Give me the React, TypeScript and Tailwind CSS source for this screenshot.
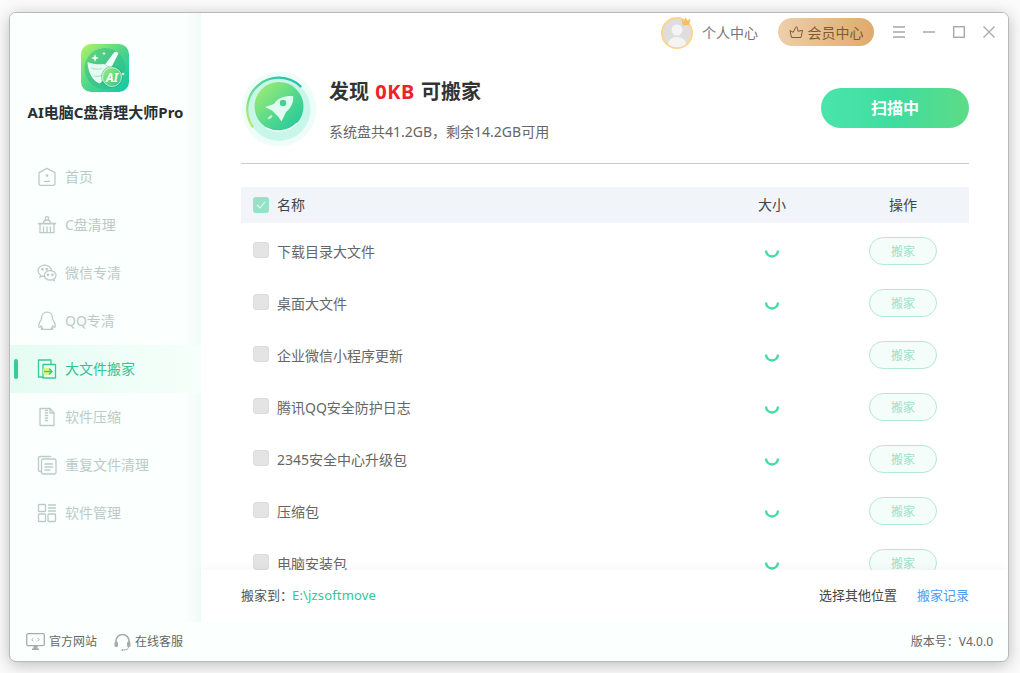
import type { ReactNode } from 'react';

const FONT = 'font-["Noto_Sans","Noto_Sans_CJK_SC",sans-serif]';

function NavIcon({ children, active }: { children: ReactNode; active?: boolean }) {
  return (
    <svg
      width="20"
      height="20"
      viewBox="0 0 20 20"
      fill="none"
      stroke={active ? '#3cc797' : '#bccbc8'}
      strokeWidth="1.3"
      strokeLinejoin="round"
      strokeLinecap="round"
    >
      {children}
    </svg>
  );
}

const navItems: { label: string; active?: boolean; icon: ReactNode }[] = [
  {
    label: '首页',
    icon: (
      <>
        <path d="M2 5.6 10 1.4l8 4.2v11.2c0 .9-.7 1.6-1.6 1.6H3.6c-.9 0-1.6-.7-1.6-1.6z" />
        <path d="M7.5 14.4h5" />
        <circle cx="10" cy="8.6" r=".7" fill="#bccbc8" />
      </>
    ),
  },
  {
    label: 'C盘清理',
    icon: (
      <>
        <path d="M1.5 8.6h17" strokeWidth="1.6" />
        <path d="M3 8.6v9h14v-9" />
        <path d="M6.5 8.6c0-2.2.6-3.6 3.5-3.6s3.500 1.400 3.500 3.600" />
        <path d="M8.500 5V2.500c0-1.300 3-1.300 3 0V5" />
        <path d="M6.500 12v5.500M10 12v5.500M13.500 12v5.500" />
      </>
    ),
  },
  {
    label: '微信专清',
    icon: (
      <>
        <path d="M7.800 2.200C4 2.200 1 4.700 1 7.800c0 1.800 1 3.300 2.600 4.400l-.7 2.100 2.400-1.300c.8.200 1.600.4 2.500.4" />
        <path d="M14.600 7.600c-.5-3-3.400-5.400-6.800-5.400" />
        <path d="M13.200 7.600c3.200 0 5.800 2.100 5.800 4.800 0 1.500-.8 2.800-2.100 3.700l.5 1.700-2-1.100c-.7.200-1.400.3-2.200.3-3.200 0-5.800-2.100-5.800-4.600s2.600-4.800 5.800-4.800z" />
        <circle cx="5.400" cy="6.300" r=".7" fill="#bccbc8" />
        <circle cx="9.800" cy="6.300" r=".7" fill="#bccbc8" />
        <circle cx="11" cy="11.800" r=".7" fill="#bccbc8" />
        <circle cx="15.400" cy="11.800" r=".7" fill="#bccbc8" />
      </>
    ),
  },
  {
    label: 'QQ专清',
    icon: (
      <path d="M10 1.200c-3.400 0-5.400 2.500-5.400 5.600 0 .8-.1 1.300-.5 2-.9 1.400-2.400 3.500-2.400 5.600 0 1 .3 1.900.8 1.900.6 0 1.200-.8 1.700-1.500.2 1 .8 1.800 1.500 2.400-.9.300-1.500.7-1.500 1.100h11.600c0-.4-.6-.8-1.500-1.100.7-.6 1.300-1.400 1.500-2.400.5.700 1.100 1.500 1.700 1.500.5 0 .8-.9.800-1.900 0-2.100-1.500-4.200-2.400-5.600-.4-.7-.5-1.200-.5-2 0-3.100-2-5.600-5.400-5.600z" />
    ),
  },
  {
    label: '大文件搬家',
    active: true,
    icon: (
      <>
        <path d="M6 18H1.500V1h12.500v4.500" />
        <path d="M6 5.500h12.500V19H6z" />
        <circle cx="9.500" cy="12.500" r="3.800" fill="#dff56e" stroke="none" />
        <path d="M7.500 12.500h7.500M12.500 10l2.500 2.500-2.500 2.500" strokeWidth="1.500" />
      </>
    ),
  },
  {
    label: '软件压缩',
    icon: (
      <>
        <path d="M3 1.500h10l4 4.500v12.500H3z" />
        <path d="M13 1.500V6h4" />
        <path d="M8.500 3.500h2M8.500 6h2M8.500 8.500h2M8.500 11h2M8.500 13.500h2" strokeWidth="1.600" />
      </>
    ),
  },
  {
    label: '重复文件清理',
    icon: (
      <>
        <path d="M4 16.500H3.200c-1 0-1.700-.7-1.700-1.700V3c0-1 .7-1.500 1.500-1.500h10.500" />
        <rect x="4.500" y="4" width="14.500" height="15" rx="1.500" />
        <path d="M8 9h7.500M8 12h7.500M8 15h5" />
      </>
    ),
  },
  {
    label: '软件管理',
    icon: (
      <>
        <rect x="1.500" y="1.500" width="7" height="7" rx=".8" />
        <rect x="1.500" y="11" width="7" height="7.500" rx=".8" />
        <rect x="11" y="11" width="7.500" height="7.500" rx=".8" />
        <path d="M11.500 2h7M11.500 5h7M11.500 8h7" />
      </>
    ),
  },
];

const rows = ['下载目录大文件', '桌面大文件', '企业微信小程序更新', '腾讯QQ安全防护日志', '2345安全中心升级包', '压缩包', '电脑安装包'];

function LogoIcon() {
  return (
    <svg width="48" height="48" viewBox="0 0 48 48" className="mr-[1px]">
      <defs>
        <linearGradient id="logoBg" x1="0" y1="0" x2="1" y2="1">
          <stop offset="0" stopColor="#b0f565" />
          <stop offset="0.5" stopColor="#4fd58a" />
          <stop offset="1" stopColor="#0cc7a9" />
        </linearGradient>
        <linearGradient id="logoBadge" x1="0" y1="0" x2="1" y2="1">
          <stop offset="0" stopColor="#a6ec6f" />
          <stop offset="1" stopColor="#22c98f" />
        </linearGradient>
      </defs>
      <rect width="48" height="48" rx="10" fill="url(#logoBg)" />
      <circle cx="24" cy="24.500" r="20.500" fill="#2fb987" opacity="0.5" />
      <path d="M33 8.500c1.200-1.300 3.500-.300 4 .500.500 1-.200 2-.800 3L30 24l-6-3.500z" fill="#f2fff9" />
      <path d="M6.500 18c5.500 2.500 11.500 2.500 16.500 2l6 3.800c-1.500 6-5 12-10.500 15.700C11.500 37 7 28 6.500 18z" fill="#e8fbf2" />
      <path d="M10 24c4 1.500 8 1.300 11 .500M13 32c3 .8 5.500.500 8-.800" stroke="#a7e8c9" strokeWidth="1.200" fill="none" />
      <circle cx="31" cy="33" r="11" fill="#1fa37c" opacity="0.4" />
      <circle cx="31" cy="33" r="9.500" fill="url(#logoBadge)" stroke="#d8f9e4" strokeWidth="0.800" />
      <text x="31" y="37.500" textAnchor="middle" fontSize="12" fontWeight="700" fontStyle="italic" fill="#fff" fontFamily="Noto Sans">AI</text>
      <path d="M14 10l1 3 3 1-3 1-1 3-1-3-3-1 3-1z" fill="#fff" />
      <path d="M23 7.500l.5 1.500 1.500.5-1.500.5-.5 1.500-.5-1.500-1.500-.5 1.500-.5z" fill="#fff" />
      <path d="M42 28l.5 1.500 1.500.5-1.500.5-.5 1.500-.5-1.500-1.500-.5 1.500-.5z" fill="#fff" />
    </svg>
  );
}

function HeroIcon() {
  return (
    <svg width="76" height="76" viewBox="0 0 76 76">
      <defs>
        <linearGradient id="heroFill" x1="0" y1="0" x2="1" y2="1">
          <stop offset="0" stopColor="#abee70" />
          <stop offset="0.6" stopColor="#4bd68f" />
          <stop offset="1" stopColor="#1cc4a0" />
        </linearGradient>
        <linearGradient id="heroArc" x1="0" y1="1" x2="1" y2="0">
          <stop offset="0" stopColor="#c6ea5a" />
          <stop offset="0.35" stopColor="#6fdd94" />
          <stop offset="1" stopColor="#10c2ac" />
        </linearGradient>
      </defs>
      <circle cx="38" cy="38" r="37.500" fill="#effdf9" />
      <circle cx="38" cy="38.500" r="31.500" fill="#c8f7ea" />
      <circle cx="38" cy="35.500" r="24.500" fill="url(#heroFill)" />
      <path d="M11.500 55.600A31.500 31.500 0 0 1 59.500 15.400" stroke="url(#heroArc)" strokeWidth="2.200" fill="none" strokeLinecap="round" />
      <path d="M25.500 57A25.500 25.500 0 0 0 55.500 52.500" stroke="#fff" strokeWidth="1.300" fill="none" strokeLinecap="round" opacity="0.9" />
      <path d="M52 25C44 24.500 36 27 33 33L24 36L31 39.500L37 45.500L40.500 50.500L45 41C50 37 53 31 52 25z" fill="#e2fbf0" />
      <circle cx="42" cy="32" r="3.200" fill="#45cf91" />
      <path d="M31 44c-2.500.5-4 2-4.500 4.500 2.500-.2 4-1.500 5-3.200z" fill="#e2fbf0" opacity="0.8" />
    </svg>
  );
}

function Spinner() {
  return (
    <svg width="14" height="10" viewBox="0 0 14 10" fill="none">
      <path d="M1 1.500A6 6 0 0 0 13 1.500" stroke="#43dba0" strokeWidth="2.300" />
    </svg>
  );
}

export default function App() {
  return (
    <div className={`${FONT} h-[673px] w-[1020px] overflow-hidden bg-[#fbfbfb] pt-[12px] pl-[9px]`}>
      <div className="flex h-[650px] w-[1000px] flex-col overflow-hidden rounded-[7px] border border-[#b9b9b9] bg-[#fbfffe] shadow-[0_3px_16px_rgba(0,0,0,0.25)]">
        <div className="flex min-h-0 flex-1">
          {/* sidebar */}
          <aside className="flex w-[191px] shrink-0 flex-col bg-gradient-to-r from-[#fbfffe] from-[92%] to-[#f1fbf8]">
            <div className="flex flex-col items-center pt-[31px]">
              <LogoIcon />
              <div className="mt-[9px] text-[15px] leading-[22px] font-bold whitespace-nowrap text-[#2a2f33]">AI电脑C盘清理大师Pro</div>
            </div>
            <nav className="mt-[30px] flex flex-col">
              {navItems.map((item) => (
                <div
                  key={item.label}
                  className={`relative flex h-[48px] items-center gap-[8px] pl-[27px] text-[14px] ${
                    item.active ? 'bg-gradient-to-r from-[#e4fcf3] to-[#f6fffb] text-[#2fc492]' : 'text-[#bccac7]'
                  }`}
                >
                  {item.active && <span className="absolute top-[14px] left-[4px] h-[20px] w-[4px] rounded-[2px] bg-[#3cc99b]" />}
                  <NavIcon active={item.active}>{item.icon}</NavIcon>
                  <span className="pb-[2px]">{item.label}</span>
                </div>
              ))}
            </nav>
          </aside>

          {/* main */}
          <main className="flex min-w-0 flex-1 flex-col bg-white">
            <div className="flex h-[39px] shrink-0 items-center justify-end pr-[13px] pb-[1px]">
              <svg width="36" height="36" viewBox="0 0 36 36">
                <circle cx="17" cy="19" r="15" fill="#dedede" stroke="#fdd48a" strokeWidth="2" />
                <circle cx="17" cy="16" r="5.500" fill="#f4f4f4" />
                <path d="M8 30c1-5 4.500-7 9-7s8 2 9 7a14 14 0 0 1-18 0z" fill="#f4f4f4" />
                <path d="M21 5l3 2 1.500-3.500 2 3 3-2-1.500 6.500-6 .5z" fill="#f7bf62" />
              </svg>
              <span className="ml-[6px] text-[14px] text-[#777]">个人中心</span>
              <div className="ml-[20px] flex h-[28px] w-[96px] items-center justify-center gap-[4px] rounded-full bg-gradient-to-r from-[#edcfa9] to-[#e0aa6b] text-[14px] text-[#7d5a36]">
                <svg width="15" height="14" viewBox="0 0 15 14" fill="none" stroke="#7d5a36" strokeWidth="1" strokeLinejoin="round">
                  <path d="M1 5.500l3.200 1.800L6.500 2.500c.3-.8 1.200-1.300 1.500 0l1.200 3.800 4.300-1-1.500 7.200H2.500z" />
                </svg>
                <span>会员中心</span>
              </div>
              <div className="ml-[19px] flex items-center gap-[18px]">
                <svg width="12" height="12" viewBox="0 0 12 12" stroke="#a8a8a8" strokeWidth="1.300"><path d="M0 1h12M0 6h12M0 11h12" /></svg>
                <svg width="12" height="12" viewBox="0 0 12 12" stroke="#a8a8a8" strokeWidth="1.300"><path d="M0 6h12" /></svg>
                <svg width="12" height="12" viewBox="0 0 12 12" fill="none" stroke="#a8a8a8" strokeWidth="1.400"><rect x=".7" y=".7" width="10.600" height="10.600" /></svg>
                <svg width="12" height="12" viewBox="0 0 12 12" stroke="#a8a8a8" strokeWidth="1.200"><path d="M.5.500l11 11M11.500.500l-11 11" /></svg>
              </div>
            </div>

            <div className="flex min-h-0 flex-1 flex-col pr-[39px] pl-[40px]">
              {/* hero */}
              <div className="flex h-[112px] shrink-0 items-start border-b border-[#cccccc]">
                <div className="mt-[19px]"><HeroIcon /></div>
                <div className="ml-[12px] flex flex-col pt-[24px]">
                  <div className="text-[20px] leading-[32px] font-bold whitespace-pre text-[#333]">
                    发现 <span className="ml-[1px] tracking-[0.5px] text-[#f0212b]">0KB</span> <span className="ml-[1px]">可搬家</span>
                  </div>
                  <div className="mt-[13px] text-[14px] leading-[22px] text-[#666]">系统盘共41.2GB，剩余14.2GB可用</div>
                </div>
                <div className="mt-[36px] ml-auto flex h-[40px] w-[148px] items-center justify-center rounded-full bg-gradient-to-r from-[#4ae5ab] via-[#3fdc9f] to-[#5cdc86] text-[16px] font-bold text-white">
                  扫描中
                </div>
              </div>

              {/* table */}
              <div className="mt-[23px] grid h-[36px] shrink-0 grid-cols-[466px_130px_132px] items-center bg-[#f1f4f9] text-[14px] text-[#444]">
                <div className="flex items-center gap-[8px] pl-[12px]">
                  <span className="flex h-[16px] w-[16px] items-center justify-center rounded-[3px] bg-[#96e2c6]">
                    <svg width="10" height="8" viewBox="0 0 10 8" fill="none" stroke="#e6f8f0" strokeWidth="1.100"><path d="M1 4l3 3 5-6" /></svg>
                  </span>
                  <span className="pb-[2px]">名称</span>
                </div>
                <div className="pb-[2px] text-center">大小</div>
                <div className="pb-[2px] text-center">操作</div>
              </div>
              <div className="min-h-0 flex-1 overflow-hidden pt-[2px]">
                {rows.map((name) => (
                  <div key={name} className="grid h-[52px] grid-cols-[466px_130px_132px] items-center text-[14px] text-[#666]">
                    <div className="flex items-center gap-[8px] pl-[12px]">
                      <span className="mb-[3px] h-[16px] w-[16px] rounded-[3px] border border-[#dcdcdc] bg-[#e4e4e4]" />
                      <span>{name}</span>
                    </div>
                    <div className="flex justify-center pt-[5px]"><Spinner /></div>
                    <div className="flex justify-center">
                      <span className="flex h-[28px] w-[68px] items-center justify-center rounded-full border border-[#b5e9d6] bg-[#f5fdfa] pt-[2px] text-[12px] text-[#9fe0c8]">搬家</span>
                    </div>
                  </div>
                ))}
              </div>
            </div>

            <div className="flex h-[52px] shrink-0 items-center bg-white pr-[39px] pl-[40px] text-[13px] text-[#555] shadow-[0_-3px_8px_rgba(0,0,0,0.03)]">
              <span>搬家到：</span>
              <span className="-ml-[1px] tracking-[0.15px] text-[#33c693]">E:\jzsoftmove</span>
              <span className="ml-auto text-[#444]">选择其他位置</span>
              <span className="ml-[20px] text-[#4a9df8]">搬家记录</span>
            </div>
          </main>
        </div>

        {/* footer */}
        <footer className="flex h-[39px] shrink-0 items-center pr-[15px] pl-[16px] text-[12px] text-[#666]">
          <svg width="19" height="17" viewBox="0 0 19 17" fill="none">
            <rect x=".7" y=".7" width="17.600" height="12" rx="1.500" stroke="#aaa" strokeWidth="1.300" />
            <path d="M7.500 5 5.800 6.700l1.700 1.700M11.500 5l1.700 1.700-1.700 1.700" stroke="#999" strokeWidth=".8" />
            <path d="M6 15.500h7v1.500H6zM7.500 13h4v2.500h-4z" fill="#aaa" />
          </svg>
          <span className="ml-[4px]">官方网站</span>
          <svg width="17" height="18" viewBox="0 0 17 18" fill="none" className="ml-[17px]">
            <path d="M2 10V8a6.500 6.500 0 0 1 13 0v2" stroke="#aaa" strokeWidth="1.600" />
            <rect x=".5" y="8.500" width="3.500" height="5.500" rx="1.500" fill="#aaa" />
            <rect x="13" y="8.500" width="3.500" height="5.500" rx="1.500" fill="#aaa" />
            <path d="M14.500 14c0 2-2 3-5 3" stroke="#aaa" strokeWidth="1" />
            <circle cx="8.500" cy="17" r="1" fill="#aaa" />
          </svg>
          <span className="ml-[4px]">在线客服</span>
          <span className="ml-auto">版本号：V4.0.0</span>
        </footer>
      </div>
    </div>
  );
}
